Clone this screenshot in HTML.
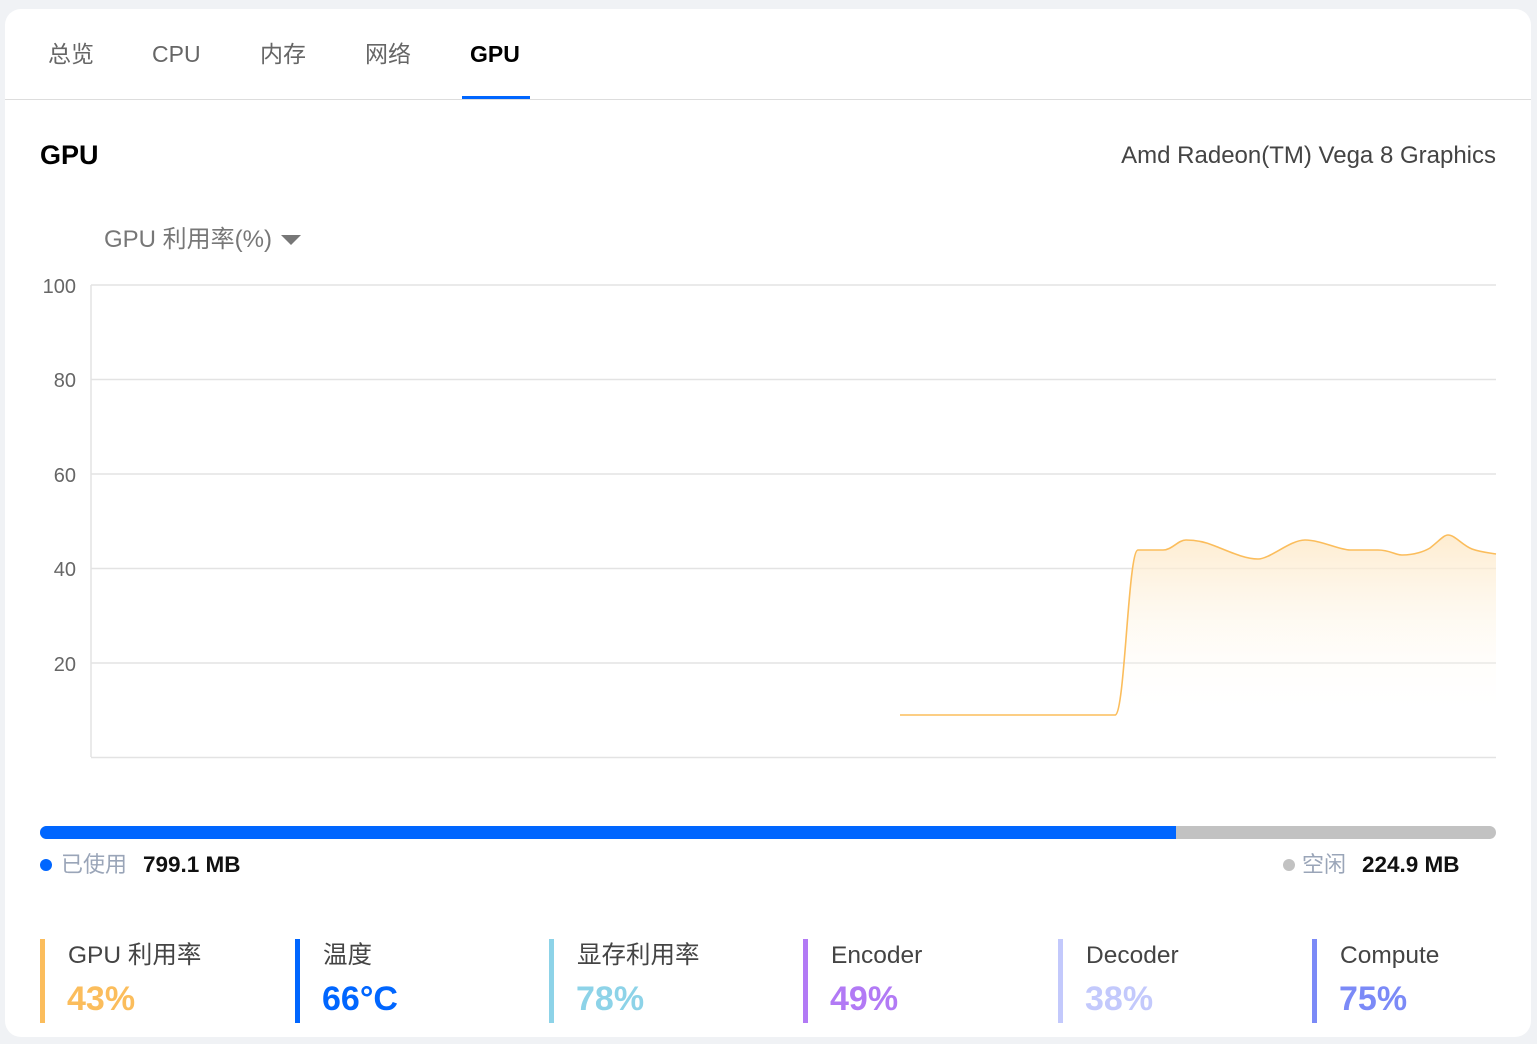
<!DOCTYPE html>
<html><head><meta charset="utf-8"><style>
*{margin:0;padding:0;box-sizing:border-box}
body{width:1537px;height:1044px;background:#f0f2f5;font-family:"Liberation Sans","Noto Sans CJK SC",sans-serif;position:relative;overflow:hidden}
.card{position:absolute;left:5px;top:9px;width:1526px;height:1028px;background:#fff;border-radius:16px}
.abs{position:absolute;white-space:nowrap}
.tab{position:absolute;top:40px;font-size:23px;color:#666;line-height:28px}
.stat{position:absolute;top:939px;height:84px;border-left:5px solid}
.stat .l{position:absolute;left:23px;top:2px;font-size:24.5px;color:#444;line-height:30px;white-space:nowrap}
.stat .v{position:absolute;left:22px;top:40px;font-size:34px;font-weight:bold;line-height:40px;white-space:nowrap}
.m{position:absolute;white-space:nowrap;top:852px;line-height:26px;height:26px}
</style></head><body>
<div class="card"></div>
<div class="tab" style="left:48px">总览</div>
<div class="tab" style="left:152px">CPU</div>
<div class="tab" style="left:260px">内存</div>
<div class="tab" style="left:365px">网络</div>
<div class="tab" style="left:470px;color:#000;font-weight:bold">GPU</div>
<div class="abs" style="left:462px;top:96px;width:68px;height:3px;background:#0066ff"></div>
<div class="abs" style="left:5px;top:99px;width:1526px;height:1px;background:#ddd"></div>
<div class="abs" style="left:40px;top:140px;font-size:27px;font-weight:bold;color:#000">GPU</div>
<div class="abs" style="right:41px;top:142px;font-size:24px;color:#444">Amd Radeon(TM) Vega 8 Graphics</div>
<div class="abs" style="left:104px;top:226px;font-size:24px;line-height:28px;color:#777">GPU 利用率(%)</div>
<svg class="abs" style="left:0;top:0" width="1537" height="1044">
<polygon points="281,235 301,235 291,245" fill="#777"/>
<defs><linearGradient id="g" x1="0" y1="0" x2="0" y2="1"><stop offset="0" stop-color="#fde9c8" stop-opacity=".85"/><stop offset="1" stop-color="#fff" stop-opacity="0"/></linearGradient></defs>
<g stroke="#e3e3e3" stroke-width="1.5">
<line x1="91" y1="285" x2="1496" y2="285"/><line x1="91" y1="379.5" x2="1496" y2="379.5"/><line x1="91" y1="474" x2="1496" y2="474"/><line x1="91" y1="568.5" x2="1496" y2="568.5"/><line x1="91" y1="663" x2="1496" y2="663"/><line x1="91" y1="757.5" x2="1496" y2="757.5"/><line x1="91" y1="285" x2="91" y2="757"/>
</g>
<g font-size="20" fill="#666" text-anchor="end"><text x="76" y="293">100</text><text x="76" y="387">80</text><text x="76" y="482">60</text><text x="76" y="576">40</text><text x="76" y="671">20</text></g>
<path d="M1115,715 C1125,715 1128,550 1138,550 L1163,550 C1172,550 1178,540 1186,540 C1198,540 1208,543 1215,546 C1230,552 1245,559 1258,559 C1270,559 1290,540 1305,540 C1320,540 1340,550 1350,550 L1378,550 C1390,550 1395,555 1402,555 C1415,555 1425,551 1430,548 C1440,540 1444,535 1448,535 C1455,535 1462,545 1472,549 C1480,552 1490,553 1496,554 L1496,720 L1115,720 Z" fill="url(#g)"/>
<path d="M900,715 L1115,715 C1125,715 1128,550 1138,550 L1163,550 C1172,550 1178,540 1186,540 C1198,540 1208,543 1215,546 C1230,552 1245,559 1258,559 C1270,559 1290,540 1305,540 C1320,540 1340,550 1350,550 L1378,550 C1390,550 1395,555 1402,555 C1415,555 1425,551 1430,548 C1440,540 1444,535 1448,535 C1455,535 1462,545 1472,549 C1480,552 1490,553 1496,554" fill="none" stroke="#fbbd5c" stroke-width="1.6"/>
<rect x="40" y="826" width="1456" height="13" rx="6.5" fill="#c2c2c2"/>
<path d="M46.5,826 H1176 V839 H46.5 A6.5,6.5 0 0 1 46.5,826 Z" fill="#0066ff"/>
<circle cx="46" cy="865" r="6" fill="#0066ff"/>
<circle cx="1289" cy="865" r="6" fill="#c2c2c2"/>
</svg>
<div class="m" style="left:61px;font-size:22px;color:#9aa5b8">已使用</div>
<div class="m" style="left:143px;font-size:22.5px;font-weight:bold;color:#111">799.1 MB</div>
<div class="m" style="left:1302px;font-size:22px;color:#9aa5b8">空闲</div>
<div class="m" style="left:1362px;font-size:22.5px;font-weight:bold;color:#111">224.9 MB</div>
<div class="stat" style="left:40px;border-color:#fbbd5c"><div class="l">GPU 利用率</div><div class="v" style="color:#fbbd5c">43%</div></div>
<div class="stat" style="left:295px;border-color:#0066ff"><div class="l">温度</div><div class="v" style="color:#0066ff">66°C</div></div>
<div class="stat" style="left:549px;border-color:#8dd3e8"><div class="l">显存利用率</div><div class="v" style="color:#8dd3e8">78%</div></div>
<div class="stat" style="left:803px;border-color:#b27af5"><div class="l">Encoder</div><div class="v" style="color:#b27af5">49%</div></div>
<div class="stat" style="left:1058px;border-color:#c3c9fc"><div class="l">Decoder</div><div class="v" style="color:#c3c9fc">38%</div></div>
<div class="stat" style="left:1312px;border-color:#7b8af7"><div class="l">Compute</div><div class="v" style="color:#7b8af7">75%</div></div>
</body></html>
